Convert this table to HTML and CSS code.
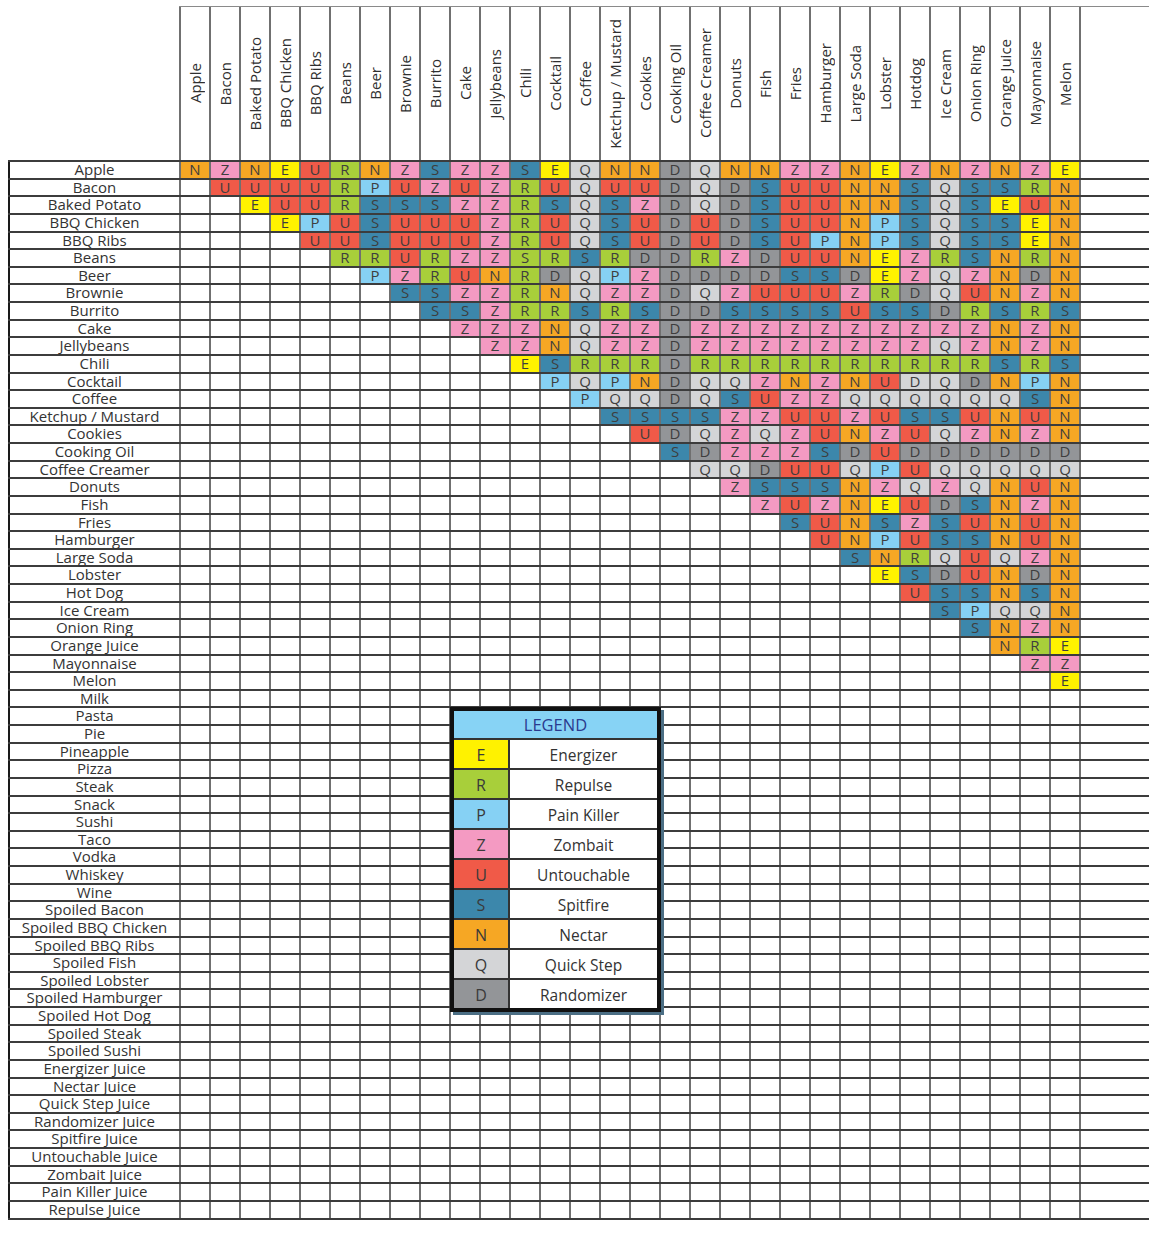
FILE: index.html
```html
<!DOCTYPE html>
<html lang="en">
<head>
<meta charset="utf-8">
<title>Food Combination Chart</title>
<link rel="stylesheet" href="styles.css">
</head>
<body>
<div class="sheet">
  <div class="head">
    <div class="hcell"><span>Apple</span></div>
    <div class="hcell"><span>Bacon</span></div>
    <div class="hcell"><span>Baked Potato</span></div>
    <div class="hcell"><span>BBQ Chicken</span></div>
    <div class="hcell"><span>BBQ Ribs</span></div>
    <div class="hcell"><span>Beans</span></div>
    <div class="hcell"><span>Beer</span></div>
    <div class="hcell"><span>Brownie</span></div>
    <div class="hcell"><span>Burrito</span></div>
    <div class="hcell"><span>Cake</span></div>
    <div class="hcell"><span>Jellybeans</span></div>
    <div class="hcell"><span>Chili</span></div>
    <div class="hcell"><span>Cocktail</span></div>
    <div class="hcell"><span>Coffee</span></div>
    <div class="hcell"><span>Ketchup / Mustard</span></div>
    <div class="hcell"><span>Cookies</span></div>
    <div class="hcell"><span>Cooking Oil</span></div>
    <div class="hcell"><span>Coffee Creamer</span></div>
    <div class="hcell"><span>Donuts</span></div>
    <div class="hcell"><span>Fish</span></div>
    <div class="hcell"><span>Fries</span></div>
    <div class="hcell"><span>Hamburger</span></div>
    <div class="hcell"><span>Large Soda</span></div>
    <div class="hcell"><span>Lobster</span></div>
    <div class="hcell"><span>Hotdog</span></div>
    <div class="hcell"><span>Ice Cream</span></div>
    <div class="hcell"><span>Onion Ring</span></div>
    <div class="hcell"><span>Orange Juice</span></div>
    <div class="hcell"><span>Mayonnaise</span></div>
    <div class="hcell"><span>Melon</span></div>
    <div class="hextra"></div>
  </div>
  <div class="rows">
    <div class="row"><div class="lbl">Apple</div><div class="cells"><b class="n">N</b><b class="z">Z</b><b class="n">N</b><b class="e">E</b><b class="u">U</b><b class="r">R</b><b class="n">N</b><b class="z">Z</b><b class="s">S</b><b class="z">Z</b><b class="z">Z</b><b class="s">S</b><b class="e">E</b><b class="q">Q</b><b class="n">N</b><b class="n">N</b><b class="d">D</b><b class="q">Q</b><b class="n">N</b><b class="n">N</b><b class="z">Z</b><b class="z">Z</b><b class="n">N</b><b class="e">E</b><b class="z">Z</b><b class="n">N</b><b class="z">Z</b><b class="n">N</b><b class="z">Z</b><b class="e">E</b></div><div class="extra"></div></div>
    <div class="row"><div class="lbl">Bacon</div><div class="cells"><i></i><b class="u">U</b><b class="u">U</b><b class="u">U</b><b class="u">U</b><b class="r">R</b><b class="p">P</b><b class="u">U</b><b class="z">Z</b><b class="u">U</b><b class="z">Z</b><b class="r">R</b><b class="u">U</b><b class="q">Q</b><b class="u">U</b><b class="u">U</b><b class="d">D</b><b class="q">Q</b><b class="d">D</b><b class="s">S</b><b class="u">U</b><b class="u">U</b><b class="n">N</b><b class="n">N</b><b class="s">S</b><b class="q">Q</b><b class="s">S</b><b class="s">S</b><b class="r">R</b><b class="n">N</b></div><div class="extra"></div></div>
    <div class="row"><div class="lbl">Baked Potato</div><div class="cells"><i></i><i></i><b class="e">E</b><b class="u">U</b><b class="u">U</b><b class="r">R</b><b class="s">S</b><b class="s">S</b><b class="s">S</b><b class="z">Z</b><b class="z">Z</b><b class="r">R</b><b class="s">S</b><b class="q">Q</b><b class="s">S</b><b class="z">Z</b><b class="d">D</b><b class="q">Q</b><b class="d">D</b><b class="s">S</b><b class="u">U</b><b class="u">U</b><b class="n">N</b><b class="n">N</b><b class="s">S</b><b class="q">Q</b><b class="s">S</b><b class="e">E</b><b class="u">U</b><b class="n">N</b></div><div class="extra"></div></div>
    <div class="row"><div class="lbl">BBQ Chicken</div><div class="cells"><i></i><i></i><i></i><b class="e">E</b><b class="p">P</b><b class="u">U</b><b class="s">S</b><b class="u">U</b><b class="u">U</b><b class="u">U</b><b class="z">Z</b><b class="r">R</b><b class="u">U</b><b class="q">Q</b><b class="s">S</b><b class="u">U</b><b class="d">D</b><b class="u">U</b><b class="d">D</b><b class="s">S</b><b class="u">U</b><b class="u">U</b><b class="n">N</b><b class="p">P</b><b class="s">S</b><b class="q">Q</b><b class="s">S</b><b class="s">S</b><b class="e">E</b><b class="n">N</b></div><div class="extra"></div></div>
    <div class="row"><div class="lbl">BBQ Ribs</div><div class="cells"><i></i><i></i><i></i><i></i><b class="u">U</b><b class="u">U</b><b class="s">S</b><b class="u">U</b><b class="u">U</b><b class="u">U</b><b class="z">Z</b><b class="r">R</b><b class="u">U</b><b class="q">Q</b><b class="s">S</b><b class="u">U</b><b class="d">D</b><b class="u">U</b><b class="d">D</b><b class="s">S</b><b class="u">U</b><b class="p">P</b><b class="n">N</b><b class="p">P</b><b class="s">S</b><b class="q">Q</b><b class="s">S</b><b class="s">S</b><b class="e">E</b><b class="n">N</b></div><div class="extra"></div></div>
    <div class="row"><div class="lbl">Beans</div><div class="cells"><i></i><i></i><i></i><i></i><i></i><b class="r">R</b><b class="r">R</b><b class="u">U</b><b class="r">R</b><b class="z">Z</b><b class="z">Z</b><b class="r">S</b><b class="r">R</b><b class="s">S</b><b class="r">R</b><b class="d">D</b><b class="d">D</b><b class="r">R</b><b class="z">Z</b><b class="d">D</b><b class="u">U</b><b class="u">U</b><b class="n">N</b><b class="e">E</b><b class="z">Z</b><b class="r">R</b><b class="s">S</b><b class="n">N</b><b class="r">R</b><b class="n">N</b></div><div class="extra"></div></div>
    <div class="row"><div class="lbl">Beer</div><div class="cells"><i></i><i></i><i></i><i></i><i></i><i></i><b class="p">P</b><b class="z">Z</b><b class="r">R</b><b class="u">U</b><b class="n">N</b><b class="r">R</b><b class="d">D</b><b class="q">Q</b><b class="p">P</b><b class="z">Z</b><b class="d">D</b><b class="d">D</b><b class="d">D</b><b class="d">D</b><b class="s">S</b><b class="s">S</b><b class="d">D</b><b class="e">E</b><b class="z">Z</b><b class="q">Q</b><b class="z">Z</b><b class="n">N</b><b class="d">D</b><b class="n">N</b></div><div class="extra"></div></div>
    <div class="row"><div class="lbl">Brownie</div><div class="cells"><i></i><i></i><i></i><i></i><i></i><i></i><i></i><b class="s">S</b><b class="s">S</b><b class="z">Z</b><b class="z">Z</b><b class="r">R</b><b class="n">N</b><b class="q">Q</b><b class="z">Z</b><b class="z">Z</b><b class="d">D</b><b class="q">Q</b><b class="z">Z</b><b class="u">U</b><b class="u">U</b><b class="u">U</b><b class="z">Z</b><b class="r">R</b><b class="d">D</b><b class="q">Q</b><b class="u">U</b><b class="n">N</b><b class="z">Z</b><b class="n">N</b></div><div class="extra"></div></div>
    <div class="row"><div class="lbl">Burrito</div><div class="cells"><i></i><i></i><i></i><i></i><i></i><i></i><i></i><i></i><b class="s">S</b><b class="s">S</b><b class="z">Z</b><b class="r">R</b><b class="r">R</b><b class="s">S</b><b class="r">R</b><b class="s">S</b><b class="d">D</b><b class="d">D</b><b class="s">S</b><b class="s">S</b><b class="s">S</b><b class="s">S</b><b class="u">U</b><b class="s">S</b><b class="s">S</b><b class="d">D</b><b class="r">R</b><b class="s">S</b><b class="r">R</b><b class="s">S</b></div><div class="extra"></div></div>
    <div class="row"><div class="lbl">Cake</div><div class="cells"><i></i><i></i><i></i><i></i><i></i><i></i><i></i><i></i><i></i><b class="z">Z</b><b class="z">Z</b><b class="z">Z</b><b class="n">N</b><b class="q">Q</b><b class="z">Z</b><b class="z">Z</b><b class="d">D</b><b class="z">Z</b><b class="z">Z</b><b class="z">Z</b><b class="z">Z</b><b class="z">Z</b><b class="z">Z</b><b class="z">Z</b><b class="z">Z</b><b class="z">Z</b><b class="z">Z</b><b class="n">N</b><b class="z">Z</b><b class="n">N</b></div><div class="extra"></div></div>
    <div class="row"><div class="lbl">Jellybeans</div><div class="cells"><i></i><i></i><i></i><i></i><i></i><i></i><i></i><i></i><i></i><i></i><b class="z">Z</b><b class="z">Z</b><b class="n">N</b><b class="q">Q</b><b class="z">Z</b><b class="z">Z</b><b class="d">D</b><b class="z">Z</b><b class="z">Z</b><b class="z">Z</b><b class="z">Z</b><b class="z">Z</b><b class="z">Z</b><b class="z">Z</b><b class="z">Z</b><b class="q">Q</b><b class="z">Z</b><b class="n">N</b><b class="z">Z</b><b class="n">N</b></div><div class="extra"></div></div>
    <div class="row"><div class="lbl">Chili</div><div class="cells"><i></i><i></i><i></i><i></i><i></i><i></i><i></i><i></i><i></i><i></i><i></i><b class="e">E</b><b class="s">S</b><b class="r">R</b><b class="r">R</b><b class="r">R</b><b class="d">D</b><b class="r">R</b><b class="r">R</b><b class="r">R</b><b class="r">R</b><b class="r">R</b><b class="r">R</b><b class="r">R</b><b class="r">R</b><b class="r">R</b><b class="r">R</b><b class="s">S</b><b class="r">R</b><b class="s">S</b></div><div class="extra"></div></div>
    <div class="row"><div class="lbl">Cocktail</div><div class="cells"><i></i><i></i><i></i><i></i><i></i><i></i><i></i><i></i><i></i><i></i><i></i><i></i><b class="p">P</b><b class="q">Q</b><b class="p">P</b><b class="n">N</b><b class="d">D</b><b class="q">Q</b><b class="q">Q</b><b class="z">Z</b><b class="n">N</b><b class="z">Z</b><b class="n">N</b><b class="u">U</b><b class="q">D</b><b class="q">Q</b><b class="d">D</b><b class="n">N</b><b class="p">P</b><b class="n">N</b></div><div class="extra"></div></div>
    <div class="row"><div class="lbl">Coffee</div><div class="cells"><i></i><i></i><i></i><i></i><i></i><i></i><i></i><i></i><i></i><i></i><i></i><i></i><i></i><b class="p">P</b><b class="q">Q</b><b class="q">Q</b><b class="d">D</b><b class="q">Q</b><b class="s">S</b><b class="u">U</b><b class="z">Z</b><b class="z">Z</b><b class="q">Q</b><b class="q">Q</b><b class="q">Q</b><b class="q">Q</b><b class="q">Q</b><b class="q">Q</b><b class="s">S</b><b class="n">N</b></div><div class="extra"></div></div>
    <div class="row"><div class="lbl">Ketchup / Mustard</div><div class="cells"><i></i><i></i><i></i><i></i><i></i><i></i><i></i><i></i><i></i><i></i><i></i><i></i><i></i><i></i><b class="s">S</b><b class="s">S</b><b class="s">S</b><b class="s">S</b><b class="z">Z</b><b class="z">Z</b><b class="u">U</b><b class="u">U</b><b class="z">Z</b><b class="u">U</b><b class="s">S</b><b class="s">S</b><b class="u">U</b><b class="n">N</b><b class="u">U</b><b class="n">N</b></div><div class="extra"></div></div>
    <div class="row"><div class="lbl">Cookies</div><div class="cells"><i></i><i></i><i></i><i></i><i></i><i></i><i></i><i></i><i></i><i></i><i></i><i></i><i></i><i></i><i></i><b class="u">U</b><b class="d">D</b><b class="q">Q</b><b class="z">Z</b><b class="q">Q</b><b class="z">Z</b><b class="u">U</b><b class="n">N</b><b class="z">Z</b><b class="u">U</b><b class="q">Q</b><b class="z">Z</b><b class="n">N</b><b class="z">Z</b><b class="n">N</b></div><div class="extra"></div></div>
    <div class="row"><div class="lbl">Cooking Oil</div><div class="cells"><i></i><i></i><i></i><i></i><i></i><i></i><i></i><i></i><i></i><i></i><i></i><i></i><i></i><i></i><i></i><i></i><b class="s">S</b><b class="d">D</b><b class="z">Z</b><b class="z">Z</b><b class="z">Z</b><b class="s">S</b><b class="d">D</b><b class="u">U</b><b class="d">D</b><b class="d">D</b><b class="d">D</b><b class="d">D</b><b class="d">D</b><b class="d">D</b></div><div class="extra"></div></div>
    <div class="row"><div class="lbl">Coffee Creamer</div><div class="cells"><i></i><i></i><i></i><i></i><i></i><i></i><i></i><i></i><i></i><i></i><i></i><i></i><i></i><i></i><i></i><i></i><i></i><b class="q">Q</b><b class="q">Q</b><b class="d">D</b><b class="u">U</b><b class="u">U</b><b class="q">Q</b><b class="p">P</b><b class="u">U</b><b class="q">Q</b><b class="q">Q</b><b class="q">Q</b><b class="q">Q</b><b class="q">Q</b></div><div class="extra"></div></div>
    <div class="row"><div class="lbl">Donuts</div><div class="cells"><i></i><i></i><i></i><i></i><i></i><i></i><i></i><i></i><i></i><i></i><i></i><i></i><i></i><i></i><i></i><i></i><i></i><i></i><b class="z">Z</b><b class="s">S</b><b class="s">S</b><b class="s">S</b><b class="n">N</b><b class="z">Z</b><b class="q">Q</b><b class="z">Z</b><b class="q">Q</b><b class="n">N</b><b class="u">U</b><b class="n">N</b></div><div class="extra"></div></div>
    <div class="row"><div class="lbl">Fish</div><div class="cells"><i></i><i></i><i></i><i></i><i></i><i></i><i></i><i></i><i></i><i></i><i></i><i></i><i></i><i></i><i></i><i></i><i></i><i></i><i></i><b class="z">Z</b><b class="u">U</b><b class="z">Z</b><b class="n">N</b><b class="e">E</b><b class="u">U</b><b class="d">D</b><b class="s">S</b><b class="n">N</b><b class="z">Z</b><b class="n">N</b></div><div class="extra"></div></div>
    <div class="row"><div class="lbl">Fries</div><div class="cells"><i></i><i></i><i></i><i></i><i></i><i></i><i></i><i></i><i></i><i></i><i></i><i></i><i></i><i></i><i></i><i></i><i></i><i></i><i></i><i></i><b class="s">S</b><b class="u">U</b><b class="n">N</b><b class="s">S</b><b class="z">Z</b><b class="s">S</b><b class="u">U</b><b class="n">N</b><b class="u">U</b><b class="n">N</b></div><div class="extra"></div></div>
    <div class="row"><div class="lbl">Hamburger</div><div class="cells"><i></i><i></i><i></i><i></i><i></i><i></i><i></i><i></i><i></i><i></i><i></i><i></i><i></i><i></i><i></i><i></i><i></i><i></i><i></i><i></i><i></i><b class="u">U</b><b class="n">N</b><b class="p">P</b><b class="u">U</b><b class="s">S</b><b class="s">S</b><b class="n">N</b><b class="u">U</b><b class="n">N</b></div><div class="extra"></div></div>
    <div class="row"><div class="lbl">Large Soda</div><div class="cells"><i></i><i></i><i></i><i></i><i></i><i></i><i></i><i></i><i></i><i></i><i></i><i></i><i></i><i></i><i></i><i></i><i></i><i></i><i></i><i></i><i></i><i></i><b class="s">S</b><b class="n">N</b><b class="r">R</b><b class="q">Q</b><b class="u">U</b><b class="q">Q</b><b class="z">Z</b><b class="n">N</b></div><div class="extra"></div></div>
    <div class="row"><div class="lbl">Lobster</div><div class="cells"><i></i><i></i><i></i><i></i><i></i><i></i><i></i><i></i><i></i><i></i><i></i><i></i><i></i><i></i><i></i><i></i><i></i><i></i><i></i><i></i><i></i><i></i><i></i><b class="e">E</b><b class="s">S</b><b class="d">D</b><b class="u">U</b><b class="n">N</b><b class="d">D</b><b class="n">N</b></div><div class="extra"></div></div>
    <div class="row"><div class="lbl">Hot Dog</div><div class="cells"><i></i><i></i><i></i><i></i><i></i><i></i><i></i><i></i><i></i><i></i><i></i><i></i><i></i><i></i><i></i><i></i><i></i><i></i><i></i><i></i><i></i><i></i><i></i><i></i><b class="u">U</b><b class="s">S</b><b class="s">S</b><b class="n">N</b><b class="s">S</b><b class="n">N</b></div><div class="extra"></div></div>
    <div class="row"><div class="lbl">Ice Cream</div><div class="cells"><i></i><i></i><i></i><i></i><i></i><i></i><i></i><i></i><i></i><i></i><i></i><i></i><i></i><i></i><i></i><i></i><i></i><i></i><i></i><i></i><i></i><i></i><i></i><i></i><i></i><b class="s">S</b><b class="p">P</b><b class="q">Q</b><b class="q">Q</b><b class="n">N</b></div><div class="extra"></div></div>
    <div class="row"><div class="lbl">Onion Ring</div><div class="cells"><i></i><i></i><i></i><i></i><i></i><i></i><i></i><i></i><i></i><i></i><i></i><i></i><i></i><i></i><i></i><i></i><i></i><i></i><i></i><i></i><i></i><i></i><i></i><i></i><i></i><i></i><b class="s">S</b><b class="n">N</b><b class="z">Z</b><b class="n">N</b></div><div class="extra"></div></div>
    <div class="row"><div class="lbl">Orange Juice</div><div class="cells"><i></i><i></i><i></i><i></i><i></i><i></i><i></i><i></i><i></i><i></i><i></i><i></i><i></i><i></i><i></i><i></i><i></i><i></i><i></i><i></i><i></i><i></i><i></i><i></i><i></i><i></i><i></i><b class="n">N</b><b class="r">R</b><b class="e">E</b></div><div class="extra"></div></div>
    <div class="row"><div class="lbl">Mayonnaise</div><div class="cells"><i></i><i></i><i></i><i></i><i></i><i></i><i></i><i></i><i></i><i></i><i></i><i></i><i></i><i></i><i></i><i></i><i></i><i></i><i></i><i></i><i></i><i></i><i></i><i></i><i></i><i></i><i></i><i></i><b class="z">Z</b><b class="z">Z</b></div><div class="extra"></div></div>
    <div class="row"><div class="lbl">Melon</div><div class="cells"><i></i><i></i><i></i><i></i><i></i><i></i><i></i><i></i><i></i><i></i><i></i><i></i><i></i><i></i><i></i><i></i><i></i><i></i><i></i><i></i><i></i><i></i><i></i><i></i><i></i><i></i><i></i><i></i><i></i><b class="e">E</b></div><div class="extra"></div></div>
    <div class="row"><div class="lbl">Milk</div><div class="cells"></div><div class="extra"></div></div>
    <div class="row"><div class="lbl">Pasta</div><div class="cells"></div><div class="extra"></div></div>
    <div class="row"><div class="lbl">Pie</div><div class="cells"></div><div class="extra"></div></div>
    <div class="row"><div class="lbl">Pineapple</div><div class="cells"></div><div class="extra"></div></div>
    <div class="row"><div class="lbl">Pizza</div><div class="cells"></div><div class="extra"></div></div>
    <div class="row"><div class="lbl">Steak</div><div class="cells"></div><div class="extra"></div></div>
    <div class="row"><div class="lbl">Snack</div><div class="cells"></div><div class="extra"></div></div>
    <div class="row"><div class="lbl">Sushi</div><div class="cells"></div><div class="extra"></div></div>
    <div class="row"><div class="lbl">Taco</div><div class="cells"></div><div class="extra"></div></div>
    <div class="row"><div class="lbl">Vodka</div><div class="cells"></div><div class="extra"></div></div>
    <div class="row"><div class="lbl">Whiskey</div><div class="cells"></div><div class="extra"></div></div>
    <div class="row"><div class="lbl">Wine</div><div class="cells"></div><div class="extra"></div></div>
    <div class="row"><div class="lbl">Spoiled Bacon</div><div class="cells"></div><div class="extra"></div></div>
    <div class="row"><div class="lbl">Spoiled BBQ Chicken</div><div class="cells"></div><div class="extra"></div></div>
    <div class="row"><div class="lbl">Spoiled BBQ Ribs</div><div class="cells"></div><div class="extra"></div></div>
    <div class="row"><div class="lbl">Spoiled Fish</div><div class="cells"></div><div class="extra"></div></div>
    <div class="row"><div class="lbl">Spoiled Lobster</div><div class="cells"></div><div class="extra"></div></div>
    <div class="row"><div class="lbl">Spoiled Hamburger</div><div class="cells"></div><div class="extra"></div></div>
    <div class="row"><div class="lbl">Spoiled Hot Dog</div><div class="cells"></div><div class="extra"></div></div>
    <div class="row"><div class="lbl">Spoiled Steak</div><div class="cells"></div><div class="extra"></div></div>
    <div class="row"><div class="lbl">Spoiled Sushi</div><div class="cells"></div><div class="extra"></div></div>
    <div class="row"><div class="lbl">Energizer Juice</div><div class="cells"></div><div class="extra"></div></div>
    <div class="row"><div class="lbl">Nectar Juice</div><div class="cells"></div><div class="extra"></div></div>
    <div class="row"><div class="lbl">Quick Step Juice</div><div class="cells"></div><div class="extra"></div></div>
    <div class="row"><div class="lbl">Randomizer Juice</div><div class="cells"></div><div class="extra"></div></div>
    <div class="row"><div class="lbl">Spitfire Juice</div><div class="cells"></div><div class="extra"></div></div>
    <div class="row"><div class="lbl">Untouchable Juice</div><div class="cells"></div><div class="extra"></div></div>
    <div class="row"><div class="lbl">Zombait Juice</div><div class="cells"></div><div class="extra"></div></div>
    <div class="row"><div class="lbl">Pain Killer Juice</div><div class="cells"></div><div class="extra"></div></div>
    <div class="row"><div class="lbl">Repulse Juice</div><div class="cells"></div><div class="extra"></div></div>
  </div>

  <div class="legend">
    <div class="lg-head">LEGEND</div>
    <div class="lg-row"><div class="lg-sw e">E</div><div class="lg-name">Energizer</div></div>
    <div class="lg-row"><div class="lg-sw r">R</div><div class="lg-name">Repulse</div></div>
    <div class="lg-row"><div class="lg-sw p">P</div><div class="lg-name">Pain Killer</div></div>
    <div class="lg-row"><div class="lg-sw z">Z</div><div class="lg-name">Zombait</div></div>
    <div class="lg-row"><div class="lg-sw u">U</div><div class="lg-name">Untouchable</div></div>
    <div class="lg-row"><div class="lg-sw s">S</div><div class="lg-name">Spitfire</div></div>
    <div class="lg-row"><div class="lg-sw n">N</div><div class="lg-name">Nectar</div></div>
    <div class="lg-row"><div class="lg-sw q">Q</div><div class="lg-name">Quick Step</div></div>
    <div class="lg-row"><div class="lg-sw d">D</div><div class="lg-name">Randomizer</div></div>
  </div>
</div>
</body>
</html>
```

FILE: styles.css
```css
* {
  box-sizing: border-box;
}

html,
body {
  margin: 0;
  padding: 0;
  background: #ffffff;
}

body {
  font-family: "Open Sans", "Noto Sans", sans-serif;
  color: #333333;
}

.sheet {
  position: relative;
  margin: 6px 0 0 8px;
  width: 1141px;
}

/* column header */
.head {
  display: flex;
  height: 154px;
  margin-left: 171px;
  border-top: 1px solid #8a8a8a;
}

.hcell {
  flex: 0 0 30px;
  border-left: 2px solid #707070;
  display: flex;
  align-items: center;
  justify-content: center;
}

.hcell span {
  writing-mode: vertical-rl;
  transform: rotate(180deg);
  font-size: 15px;
  line-height: 1;
  white-space: nowrap;
  color: #2f2f2f;
}

.hextra {
  flex: 0 0 70px;
  border-left: 2px solid #707070;
}

/* body rows */
.rows {
  border-bottom: 2px solid #3c3c3c;
}

.row {
  display: flex;
  height: 17.64px;
  border-top: 2px solid #3c3c3c;
}

.lbl {
  flex: 0 0 171px;
  border-left: 2px solid #1a1a1a;
  text-align: center;
  font-size: 15px;
  line-height: 15.64px;
  white-space: nowrap;
  color: #333333;
}

.cells {
  flex: 0 0 900px;
  display: flex;
  background: repeating-linear-gradient(to right, #707070 0 2px, transparent 2px 30px);
}

.cells i,
.cells b {
  flex: 0 0 30px;
}

.cells b {
  border-left: 2px solid #707070;
  font-weight: normal;
  font-size: 15px;
  line-height: 15.64px;
  text-align: center;
  color: #3e3e3e;
}

.extra {
  flex: 0 0 70px;
  border-left: 2px solid #707070;
}

/* colour key */
.e { background: #fff200; }
.r { background: #a8cf3a; }
.p { background: #86d1f4; }
.z { background: #f49ac2; }
.u { background: #f05a48; }
.s { background: #3c87ab; }
.n { background: #f6a724; }
.q { background: #d4d5d7; }
.d { background: #939598; }

/* legend box */
.legend {
  position: absolute;
  left: 442px;
  top: 701px;
  width: 211px;
  border: 4px solid #111111;
  box-shadow: 3px 3px 0 #4b6e84;
  background: #ffffff;
}

.lg-head {
  height: 27px;
  background: #87d3f5;
  color: #2b3a8e;
  font-size: 16.5px;
  line-height: 28px;
  text-align: center;
}

.lg-row {
  display: flex;
  height: 30px;
  border-top: 2px solid #333333;
}

.lg-sw {
  flex: 0 0 56px;
  border-right: 2px solid #333333;
  text-align: center;
  font-size: 16px;
  line-height: 30px;
  color: #3a3a3a;
}

.lg-name {
  flex: 1;
  text-align: center;
  font-size: 15.5px;
  line-height: 30px;
  color: #333333;
}
```
